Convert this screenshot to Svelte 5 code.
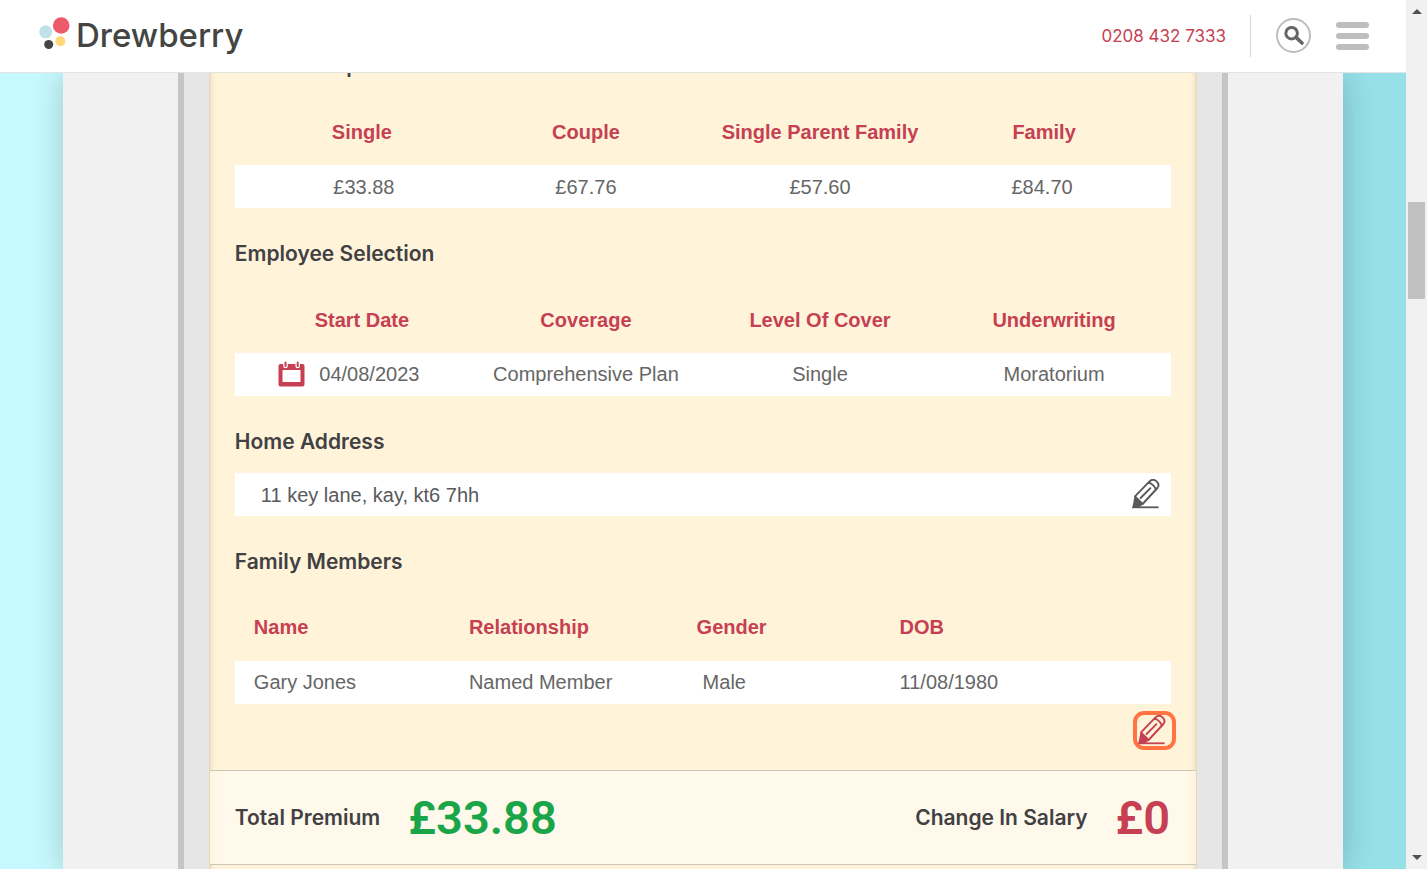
<script>
  const premiums = [
    { label: 'Single', value: '£33.88' },
    { label: 'Couple', value: '£67.76' },
    { label: 'Single Parent Family', value: '£57.60' },
    { label: 'Family', value: '£84.70' }
  ];
  const members = [
    { name: 'Gary Jones', relationship: 'Named Member', gender: 'Male', dob: '11/08/1980' }
  ];
</script>

{#snippet pencil()}
  <svg class="pencil" viewBox="0 0 28 30" width="28" height="30" aria-hidden="true">
    <g fill="none" stroke="currentColor" stroke-width="1.9" stroke-linejoin="round" stroke-linecap="round">
      <path d="M3 17.4 L17.8 2.2 C20 0.4 22.8 0.6 24.8 2.6 C26.8 4.6 27 7 25.4 9 L10.6 25 Z" />
      <path d="M16.4 3.8 C19.4 4 23.2 7.6 23.8 10.6" />
      <path d="M8.6 19 L18.4 9.2" />
    </g>
    <path d="M2.6 17 L11 25.4 L7.4 28 L0.2 29.2 Z" fill="currentColor" />
    <path d="M0.5 28.3 H26.6" fill="none" stroke="currentColor" stroke-width="1.8" />
  </svg>
{/snippet}

<div class="shell">
  <div class="page">
    <header>
      <a class="logo" href="/" aria-label="Drewberry">
        <svg viewBox="0 0 32 36" width="32" height="36" aria-hidden="true">
          <circle cx="22.2" cy="8.5" r="8.3" fill="#ed5a6c" />
          <circle cx="6.7" cy="14.8" r="6.5" fill="#bfe2e7" />
          <circle cx="21.3" cy="24.2" r="5" fill="#ffd978" />
          <circle cx="9.7" cy="27.5" r="4.5" fill="#444443" />
        </svg>
        <span>Drewberry</span>
      </a>
      <div class="tools">
        <a class="phone" href="tel:02084327333">0208 432 7333</a>
        <button class="search" aria-label="Search">
          <svg viewBox="0 0 20 20" width="20" height="20" aria-hidden="true">
            <circle cx="7.6" cy="7.2" r="5.8" fill="none" stroke="#666" stroke-width="3" />
            <path d="M12 11.4 L18 17" stroke="#666" stroke-width="3.6" stroke-linecap="round" />
          </svg>
        </button>
        <button class="burger" aria-label="Menu"><i></i><i></i><i></i></button>
      </div>
    </header>

    <main>
      <div class="sheet">
        <div class="frame">
          <div class="panel">
            <div class="details">
              <h2>Premium Options</h2>
              <table class="premiums">
                <thead>
                  <tr>{#each premiums as p}<th scope="col">{p.label}</th>{/each}</tr>
                </thead>
                <tbody>
                  <tr>{#each premiums as p}<td>{p.value}</td>{/each}</tr>
                </tbody>
              </table>

              <h2>Employee Selection</h2>
              <table class="selection">
                <thead>
                  <tr>
                    <th scope="col">Start Date</th>
                    <th scope="col">Coverage</th>
                    <th scope="col">Level Of Cover</th>
                    <th scope="col">Underwriting</th>
                  </tr>
                </thead>
                <tbody>
                  <tr>
                    <td>
                      <span class="date">
                        <svg viewBox="0 0 27 26" width="27" height="26" aria-hidden="true">
                          <path fill="#c63f52" fill-rule="evenodd" d="M2.5 3 H24.5 Q26.5 3 26.5 5 V23.5 Q26.5 25.5 24.5 25.5 H2.5 Q0.5 25.5 0.5 23.5 V5 Q0.5 3 2.5 3 Z M4.5 9 V21 H22.5 V9 Z" />
                          <path stroke="#fff" stroke-width="4.6" stroke-linecap="round" d="M7.5 1 V5 M19.7 1 V5" />
                          <path stroke="#c63f52" stroke-width="2" stroke-linecap="round" d="M7.5 1.4 V5 M19.7 1.4 V5" />
                        </svg>
                        04/08/2023
                      </span>
                    </td>
                    <td>Comprehensive Plan</td>
                    <td>Single</td>
                    <td>Moratorium</td>
                  </tr>
                </tbody>
              </table>

              <h2>Home Address</h2>
              <div class="address">
                <span>11 key lane, kay, kt6 7hh</span>
                <button aria-label="Edit home address">{@render pencil()}</button>
              </div>

              <h2>Family Members</h2>
              <table class="members">
                <thead>
                  <tr>
                    <th scope="col">Name</th>
                    <th scope="col">Relationship</th>
                    <th scope="col">Gender</th>
                    <th scope="col">DOB</th>
                  </tr>
                </thead>
                <tbody>
                  {#each members as m}
                    <tr>
                      <td>{m.name}</td>
                      <td>{m.relationship}</td>
                      <td>{m.gender}</td>
                      <td>{m.dob}</td>
                    </tr>
                  {/each}
                </tbody>
              </table>
              <div class="actions">
                <button class="edit" aria-label="Edit family members">{@render pencil()}</button>
              </div>
            </div>

            <div class="totals">
              <div class="total">
                <span class="label">Total Premium</span>
                <strong class="good">£33.88</strong>
              </div>
              <div class="total">
                <span class="label">Change In Salary</span>
                <strong>£0</strong>
              </div>
            </div>
          </div>
        </div>
      </div>
    </main>
  </div>

  <div class="scrollbar" aria-hidden="true">
    <svg viewBox="0 0 10 5" width="10" height="5"><path d="M0 5 L5 0 L10 5 Z" fill="#505050" /></svg>
    <div class="track"><div class="thumb"></div></div>
    <svg viewBox="0 0 10 5" width="10" height="5"><path d="M0 0 L5 5 L10 0 Z" fill="#505050" /></svg>
  </div>
</div>

<style>
  * { box-sizing: border-box; }

  .shell {
    display: flex;
    height: 100vh;
    overflow: hidden;
    font: 20px/30px "Liberation Sans", Arial, sans-serif;
    color: #666;
  }
  .page {
    flex: 1;
    min-width: 0;
    display: flex;
    flex-direction: column;
  }
  button {
    padding: 0;
    border: 0;
    background: none;
    color: inherit;
    cursor: pointer;
  }
  svg { display: block; flex: none; }

  header {
    position: relative;
    z-index: 2;
    flex: none;
    display: flex;
    align-items: center;
    justify-content: space-between;
    height: 73px;
    padding: 0 37px 1px 39px;
    background: #fff;
    border-bottom: 1px solid #e4e4e4;
  }
  .logo {
    display: flex;
    align-items: center;
    gap: 5px;
    padding-bottom: 1px;
    color: #444443;
    text-decoration: none;
    font: 500 33px/38px Inter, sans-serif;
  }
  .tools {
    display: flex;
    align-items: center;
    gap: 25px;
  }
  .phone {
    padding-right: 24px;
    border-right: 1px solid #d8d8d8;
    color: #c63f52;
    text-decoration: none;
    font: 400 17px/42px Inter, sans-serif;
  }
  .search {
    display: grid;
    place-items: center;
    width: 35px;
    height: 35px;
    border: 2px solid #bdbdbd;
    border-radius: 50%;
  }
  .burger {
    display: grid;
    gap: 5px;
    width: 33px;
  }
  .burger i {
    height: 6px;
    border-radius: 3px;
    background: #bebebe;
  }

  main {
    flex: 1;
    min-height: 0;
    display: flex;
    justify-content: center;
    overflow: hidden;
    background: linear-gradient(90deg, #c6f9ff 50%, #96e0e8 50%);
  }
  .sheet {
    width: 91.1%;
    display: flex;
    justify-content: center;
    background: #f1f1f1;
    box-shadow: 0 0 30px rgba(0, 0, 0, 0.2);
  }
  .frame {
    display: flex;
    width: 82%;
    padding: 0 25px;
    background: #e6e6e6;
    border: solid #c5c5c5;
    border-width: 0 6px;
  }
  .panel {
    flex: 1;
    background: #fff4da;
    border: solid #e2d9c4;
    border-width: 0 1px;
    box-shadow: inset 5px 0 5px -4px rgba(120, 90, 20, 0.18), inset -5px 0 5px -4px rgba(120, 90, 20, 0.18);
  }
  .details { padding: 0 25px; }

  h2, .label {
    margin: 0;
    font: 600 21px/28px Inter, sans-serif;
    color: #414042;
  }
  h2 { padding-top: 2px; }
  h2:first-child { margin-top: -23px; }

  table {
    width: 100%;
    margin-bottom: 30px;
    border-collapse: collapse;
    table-layout: fixed;
  }
  th {
    padding: 37px 0 18px;
    color: #c63f52;
    font-weight: 700;
  }
  td {
    height: 43px;
    padding: 0;
    background: #fff;
    text-align: center;
  }
  .premiums th:first-child,
  .selection th:first-child { padding-left: 20px; }
  .premiums td:first-child { padding-left: 24px; }
  .premiums th:last-child { padding-right: 20px; }
  .premiums td:last-child { padding-right: 24px; }
  .selection td,
  .members td { padding-bottom: 2px; }
  .selection td:first-child { padding-right: 6px; }
  .date {
    display: flex;
    align-items: center;
    justify-content: center;
    gap: 14px;
  }
  .members { margin-bottom: 7px; }
  .members th,
  .members td { text-align: left; }
  .members th { padding: 36px 0 19px; }
  .members th:nth-child(1) { width: 25%; }
  .members th:nth-child(2) { width: 24%; }
  .members th:nth-child(3) { width: 22%; }
  .members th:first-child,
  .members td:first-child { padding-left: 19px; }
  .members th:nth-child(3) { padding-left: 3px; }
  .members td:nth-child(3) { padding-left: 9px; }

  .address {
    display: flex;
    align-items: center;
    justify-content: space-between;
    height: 43px;
    margin: 17px 0 30px;
    padding: 0 11px 0 26px;
    background: #fff;
    color: #58595b;
  }
  .address button { padding-bottom: 2px; }
  .actions {
    display: flex;
    justify-content: flex-end;
    margin-right: -5px;
    padding-bottom: 20px;
  }
  .edit {
    width: 43px;
    height: 39px;
    padding: 0 0 2px 1px;
    border: 4px solid #ff7442;
    border-radius: 11px;
    color: #c63f52;
  }

  .totals {
    display: flex;
    align-items: center;
    justify-content: space-between;
    height: 95px;
    padding: 0 26px 0 25px;
    background: #fff9ec;
    border: solid #cdc7b8;
    border-width: 1px 0;
    box-shadow: inset 12px 0 10px -10px #fff0cc, inset -12px 0 10px -10px #fff0cc;
  }
  .total {
    display: flex;
    align-items: center;
    gap: 28px;
  }
  strong {
    color: #c63f52;
    font: 600 47px/60px Roboto, sans-serif;
  }
  .good { color: #1aa548; }

  .scrollbar {
    flex: none;
    display: flex;
    flex-direction: column;
    align-items: center;
    width: 21px;
    padding: 9px 0;
    background: #f1f1f1;
  }
  .track {
    flex: 1;
    padding-top: 188px;
  }
  .thumb {
    width: 17px;
    height: 97px;
    background: #c1c1c1;
  }
</style>
